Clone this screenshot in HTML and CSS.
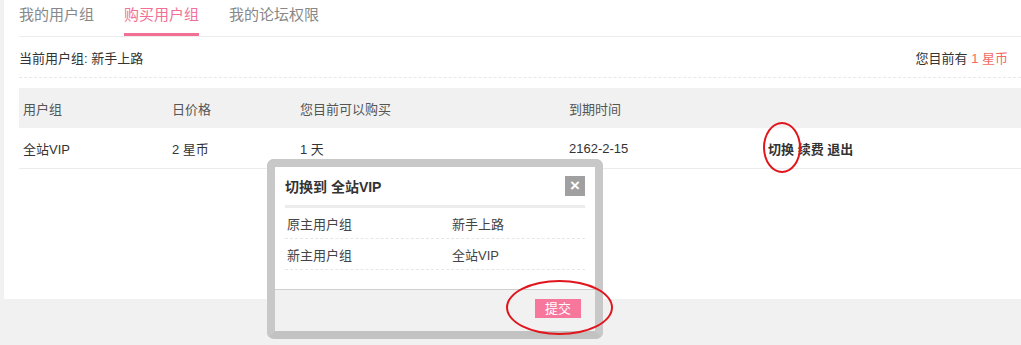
FILE: index.html
```html
<!DOCTYPE html>
<html lang="zh-CN">
<head>
    <meta charset="UTF-8">
    <title>购买用户组</title>
    <link rel="stylesheet" href="styles.css">
</head>
<body>
    <div class="panel">
        <div class="tabs">
            <a class="tab">我的用户组</a>
            <a class="tab active">购买用户组</a>
            <a class="tab">我的论坛权限</a>
        </div>

        <div class="status">
            <span>当前用户组: 新手上路</span>
            <span>您目前有 <em class="coin">1 星币</em></span>
        </div>

        <div class="table">
            <div class="tr th">
                <div class="c1">用户组</div>
                <div class="c2">日价格</div>
                <div class="c3">您目前可以购买</div>
                <div class="c4">到期时间</div>
                <div class="c5"></div>
            </div>
            <div class="tr">
                <div class="c1">全站VIP</div>
                <div class="c2">2 星币</div>
                <div class="c3">1 天</div>
                <div class="c4">2162-2-15</div>
                <div class="c5 ops"><a>切换</a> <a>续费</a> <a>退出</a></div>
            </div>
        </div>
    </div>

    <div class="dialog">
        <div class="dialog-inner">
            <div class="dialog-head">
                <h3>切换到 全站VIP</h3>
                <span class="close">×</span>
            </div>
            <div class="dialog-body">
                <div class="drow"><span>原主用户组</span><span>新手上路</span></div>
                <div class="drow"><span>新主用户组</span><span>全站VIP</span></div>
            </div>
            <div class="dialog-foot">
                <button class="submit">提交</button>
            </div>
        </div>
    </div>

    <!-- 标注圈 -->
    <span class="mark mark-switch"></span>
    <span class="mark mark-submit"></span>
</body>
</html>
```

FILE: styles.css
```css
body {
    margin: 0;
    background: #f1f1f1;
    font-family: "Liberation Sans", "Noto Sans CJK SC", sans-serif;
    font-size: 13px;
    color: #333;
    height: 345px;
    overflow: hidden;
}
.panel {
    margin-left: 4px;
    height: 299px;
    background: #fff;
    padding-left: 15px;
    box-sizing: border-box;
}
.tabs {
    display: flex;
    gap: 30px;
    height: 36px;
    border-bottom: 1px solid #ececec;
}
.tab {
    font-size: 15px;
    color: #888;
    line-height: 30px;
    height: 33px;
    border-bottom: 3px solid transparent;
}
.tab.active {
    color: #f27096;
    border-bottom-color: #f27096;
}
.status {
    display: flex;
    justify-content: space-between;
    align-items: center;
    height: 40px;
    padding-right: 13px;
    border-bottom: 1px dashed #e8e8e8;
}
.coin {
    font-style: normal;
    color: #f26a5f;
}
.table {
    margin-top: 10px;
}
.tr {
    display: flex;
    align-items: center;
    height: 41px;
    border-bottom: 1px solid #ececec;
    box-sizing: border-box;
}
.tr.th {
    background: #f1f1f1;
    height: 40px;
    border-bottom: none;
    color: #555;
}
.tr > div {
    padding-left: 4px;
    box-sizing: border-box;
}
.c1 { width: 149px; }
.c2 { width: 128px; }
.c3 { width: 269px; }
.c4 { width: 199px; }
.c5 { flex: 1; }
.ops a {
    font-weight: bold;
    color: #333;
}
.dialog {
    position: absolute;
    left: 267px;
    top: 159px;
    width: 336px;
    height: 180px;
    box-sizing: border-box;
    border: 8px solid #c8c8c8;
    border-bottom-color: #c2c2c2;
    border-radius: 7px;
    background: #fff;
}
.dialog-inner {
    height: 100%;
    display: flex;
    flex-direction: column;
}
.dialog-head {
    display: flex;
    justify-content: space-between;
    align-items: center;
    margin: 0 10px;
    height: 38px;
    border-bottom: 3px solid #ececec;
}
.dialog-head h3 {
    margin: 0;
    font-size: 14px;
    color: #333;
}
.close {
    width: 20px;
    height: 20px;
    background: #a0a0a0;
    color: #fff;
    font-size: 17px;
    font-weight: bold;
    line-height: 19px;
    text-align: center;
}
.dialog-body {
    margin: 0 10px;
    flex: 1;
}
.drow {
    display: flex;
    align-items: center;
    height: 30px;
    border-bottom: 1px dashed #e6e6e6;
    color: #444;
}
.drow span {
    flex: none;
    width: 167px;
    padding-left: 2px;
    box-sizing: border-box;
}
.drow span + span {
    width: auto;
    padding-left: 0;
}
.dialog-foot {
    height: 42px;
    background: #f1f1f1;
    border-top: 1px solid #cfcfcf;
    display: flex;
    justify-content: flex-end;
    align-items: flex-start;
    padding: 9px 14px 0 0;
    box-sizing: border-box;
}
.submit {
    width: 46px;
    height: 19px;
    padding: 0;
    border: none;
    background: #f6779b;
    color: #fff;
    font-family: inherit;
    font-size: 13px;
    line-height: 19px;
}
.mark {
    position: absolute;
    border: 2px solid #e0161c;
    border-radius: 50%;
    box-sizing: border-box;
}
.mark-switch {
    left: 763px;
    top: 122px;
    width: 38px;
    height: 51px;
}
.mark-submit {
    left: 506px;
    top: 280px;
    width: 107px;
    height: 55px;
}
```
